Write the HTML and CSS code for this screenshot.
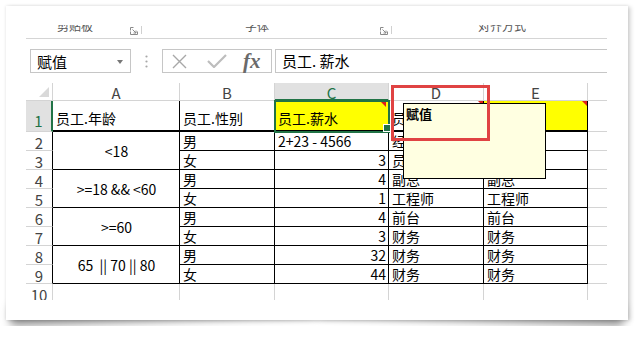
FILE: index.html
```html
<!DOCTYPE html>
<html lang="zh">
<head>
    <meta charset="UTF-8">
    <title>赋值</title>
    <link rel="stylesheet" href="styles.css">
</head>
<body>

    <div class="sheet">
        <div class="screen">

            <div class="ribbon">
                <div class="group g1">
                    <span class="glabel">剪贴板</span>
                    <svg class="launcher" width="8" height="8" viewBox="0 0 8 8"><path d="M0.5 3.5V0.5H3.5M0.5 4.5V7.5H7.5V4.5M2.5 2.5L6 6M3.5 6H6V3.5" fill="none" stroke="#8a8a8a"/></svg>
                    <i class="vsep"></i>
                </div>
                <div class="group g2">
                    <span class="glabel">字体</span>
                    <svg class="launcher" width="8" height="8" viewBox="0 0 8 8"><path d="M0.5 3.5V0.5H3.5M0.5 4.5V7.5H7.5V4.5M2.5 2.5L6 6M3.5 6H6V3.5" fill="none" stroke="#8a8a8a"/></svg>
                    <i class="vsep"></i>
                </div>
                <div class="group g3">
                    <span class="glabel">对齐方式</span>
                </div>
            </div>

            <div class="fbar">
                <div class="namebox">
                    <span>赋值</span>
                    <span class="caret"></span>
                </div>
                <div class="dots">
                    <svg width="3" height="13" viewBox="0 0 3 13"><circle cx="1.5" cy="1.5" r="1.1" fill="#a8a8a8"/><circle cx="1.5" cy="6.5" r="1.1" fill="#a8a8a8"/><circle cx="1.5" cy="11.5" r="1.1" fill="#a8a8a8"/></svg>
                </div>
                <div class="fbtns">
                    <svg class="ico-x" width="15" height="15" viewBox="0 0 15 15"><path d="M1 1L14 14M14 1L1 14" stroke="#a8a8a8" stroke-width="1.4"/></svg>
                    <svg class="ico-ok" width="20" height="14" viewBox="0 0 20 14"><path d="M1 7L7 13L19 1" fill="none" stroke="#bdbdbd" stroke-width="2.2"/></svg>
                    <span class="fx">fx</span>
                </div>
                <div class="formula">员工. 薪水</div>
            </div>

            <div class="grid">
                <div class="corner"><i class="tri"></i></div>
                <div class="hd">A</div>
                <div class="hd">B</div>
                <div class="hd on">C</div>
                <div class="hd">D</div>
                <div class="hd">E</div>
                <div class="hd"></div>

                <div class="rh sel">1</div>
                <div class="c d r1">员工.年龄</div>
                <div class="c d r1">员工.性别</div>
                <div class="c d r1 y cur note">员工.薪水</div>
                <div class="c d r1 note">员工.职位</div>
                <div class="c d r1 y note">员工.输出</div>
                <div class="c"></div>

                <div class="rh k">2</div>
                <div class="c d m">&lt;18</div>
                <div class="c d">男</div>
                <div class="c d">2+23 - 4566</div>
                <div class="c d">经理</div>
                <div class="c d">经理</div>
                <div class="c"></div>

                <div class="rh k">3</div>
                <div class="c d">女</div>
                <div class="c d n">3</div>
                <div class="c d">员工</div>
                <div class="c d">员工</div>
                <div class="c"></div>

                <div class="rh k">4</div>
                <div class="c d m">&gt;=18 &amp;&amp; &lt;60</div>
                <div class="c d">男</div>
                <div class="c d n">4</div>
                <div class="c d">副总</div>
                <div class="c d">副总</div>
                <div class="c"></div>

                <div class="rh k">5</div>
                <div class="c d">女</div>
                <div class="c d n">1</div>
                <div class="c d">工程师</div>
                <div class="c d">工程师</div>
                <div class="c"></div>

                <div class="rh k">6</div>
                <div class="c d m">&gt;=60</div>
                <div class="c d">男</div>
                <div class="c d n">4</div>
                <div class="c d">前台</div>
                <div class="c d">前台</div>
                <div class="c"></div>

                <div class="rh k">7</div>
                <div class="c d">女</div>
                <div class="c d n">3</div>
                <div class="c d">财务</div>
                <div class="c d">财务</div>
                <div class="c"></div>

                <div class="rh k">8</div>
                <div class="c d m">65&nbsp; || 70 || 80</div>
                <div class="c d">男</div>
                <div class="c d n">32</div>
                <div class="c d">财务</div>
                <div class="c d">财务</div>
                <div class="c"></div>

                <div class="rh k">9</div>
                <div class="c d">女</div>
                <div class="c d n">44</div>
                <div class="c d">财务</div>
                <div class="c d">财务</div>
                <div class="c"></div>

                <div class="rh">10</div>
                <div class="c"></div>
                <div class="c"></div>
                <div class="c"></div>
                <div class="c"></div>
                <div class="c"></div>
                <div class="c"></div>

                <!-- comment popup and the highlight frame sit over the cells -->
                <div class="comment"><b>赋值</b></div>
                <div class="callout"></div>
            </div>

        </div>
    </div>

</body>
</html>
```

FILE: styles.css
```css
* {
    box-sizing: border-box;
}
body {
    margin: 0;
    padding: 6px;
    background: #fff;
    font-family: "Noto Sans CJK SC", "Liberation Sans", sans-serif;
    color: #000;
}
.sheet {
    position: relative;
    width: 622px;
    height: 314px;
    padding: 19px 21px 20px 20px;
    background: #fff;
    box-shadow: 0 0 3px rgba(0, 0, 0, 0.12), 3px 1px 4px rgba(0, 0, 0, 0.14);
}
.sheet::before,
.sheet::after {
    content: "";
    position: absolute;
    z-index: -1;
    bottom: 14px;
    width: 49%;
    height: 20px;
    box-shadow: 0 15px 10px rgba(0, 0, 0, 0.4);
}
.sheet::before {
    left: 4px;
    transform: rotate(-2deg);
}
.sheet::after {
    right: 4px;
    transform: rotate(2deg);
}
.screen {
    width: 581px;
    height: 275px;
    overflow: hidden;
}

/* ribbon group labels, cut off at the top */
.ribbon {
    display: flex;
    height: 14px;
    border-bottom: 1px solid #d5d5d5;
    overflow: hidden;
}
.group {
    display: flex;
    align-items: flex-start;
    height: 13px;
}
.g1 {
    width: 116px;
    padding-left: 31px;
}
.g2 {
    width: 250px;
    padding-left: 103px;
}
.g3 {
    padding-left: 86px;
}
.glabel {
    font-size: 12px;
    line-height: 12px;
    margin-top: -5px;
    color: #555;
}
.launcher {
    margin: 2px 3px 0 auto;
}
.vsep {
    width: 1px;
    height: 8px;
    margin-top: 1px;
    background: #d0d0d0;
}

/* name box + formula bar */
.fbar {
    display: flex;
    height: 24px;
    margin-top: 10px;
}
.namebox {
    display: flex;
    align-items: center;
    width: 101px;
    margin-left: 4px;
    padding-left: 6px;
    border: 1px solid #c6c6c6;
    font-size: 15px;
}
.caret {
    margin: 1px 7px 0 auto;
    border-top: 4px solid #777;
    border-left: 3.5px solid transparent;
    border-right: 3.5px solid transparent;
}
.dots {
    display: flex;
    align-items: center;
    justify-content: center;
    width: 31px;
    padding-top: 1px;
}
.fbtns {
    display: flex;
    align-items: center;
    width: 110px;
    padding-left: 9px;
    border: 1px solid #c6c6c6;
}
.ico-ok {
    margin-left: 20px;
}
.fx {
    margin-left: 16px;
    font-family: "Liberation Serif", serif;
    font-style: italic;
    font-weight: bold;
    font-size: 21px;
    line-height: 20px;
    color: #6a6a6a;
}
.formula {
    flex: 1;
    margin-left: 3px;
    padding-left: 6px;
    border: 1px solid #c6c6c6;
    border-right: none;
    font-size: 15px;
    line-height: 22px;
}

/* worksheet */
.grid {
    position: relative;
    display: grid;
    grid-template-columns: 27px 127px 95px 114px 95px 104px 40px;
    grid-template-rows: 18px 31px repeat(9, 19px);
    height: 217px;
    margin-top: 10px;
    overflow: hidden;
    font-size: 14px;
}
.corner,
.hd,
.rh,
.c {
    border-right: 1px solid #d4d4d4;
    border-bottom: 1px solid #d4d4d4;
    white-space: nowrap;
}
.corner {
    display: flex;
    align-items: flex-end;
    justify-content: flex-end;
    padding: 0 3px 3px 0;
}
.tri {
    border-left: 10px solid transparent;
    border-bottom: 10px solid #d9d9d9;
}
.hd {
    padding-top: 1px;
    text-align: center;
    font-size: 15px;
    line-height: 17px;
    color: #444;
}
.hd.on {
    background: #e1e1e1;
    color: #217346;
    border-bottom: 2px solid #217346;
}
.rh {
    padding-top: 2px;
    text-align: center;
    font-size: 15px;
    line-height: 18px;
    color: #444;
}
.rh.k {
    border-right-color: #000;
}
.rh.sel {
    padding-top: 11px;
    background: #e1e1e1;
    color: #217346;
    border-right: 2px solid #217346;
}
.c {
    padding: 0 2px 0 3px;
    line-height: 18px;
}
.c.d {
    border-right-color: #000;
    border-bottom-color: #000;
}
.c.r1 {
    padding-top: 8px;
    border-bottom-width: 2px;
}
.c.y {
    background: #ffff00;
}
.c.n {
    text-align: right;
}
.c.m {
    grid-row: span 2;
    display: flex;
    align-items: center;
    justify-content: center;
}
.note {
    position: relative;
}
.note::before {
    content: "";
    position: absolute;
    top: 0;
    right: 0;
    border-top: 5px solid #e0201c;
    border-left: 5px solid transparent;
}
.cur {
    z-index: 1;
    outline: 2px solid #217346;
    outline-offset: -1px;
}
.cur::before {
    right: 2px;
    top: 1px;
}
.cur::after {
    content: "";
    position: absolute;
    right: -3px;
    bottom: -2px;
    width: 6px;
    height: 6px;
    background: #217346;
    border: 1px solid #fff;
}

.comment {
    position: absolute;
    z-index: 2;
    left: 377px;
    top: 20px;
    width: 143px;
    height: 76px;
    padding: 2px 0 0 2px;
    background: #ffffe1;
    border: 1px solid #000;
    font-size: 13px;
    line-height: 15px;
}
.callout {
    position: absolute;
    z-index: 3;
    left: 365px;
    top: 2px;
    width: 99px;
    height: 56px;
    border: 3px solid #e04343;
}
```
